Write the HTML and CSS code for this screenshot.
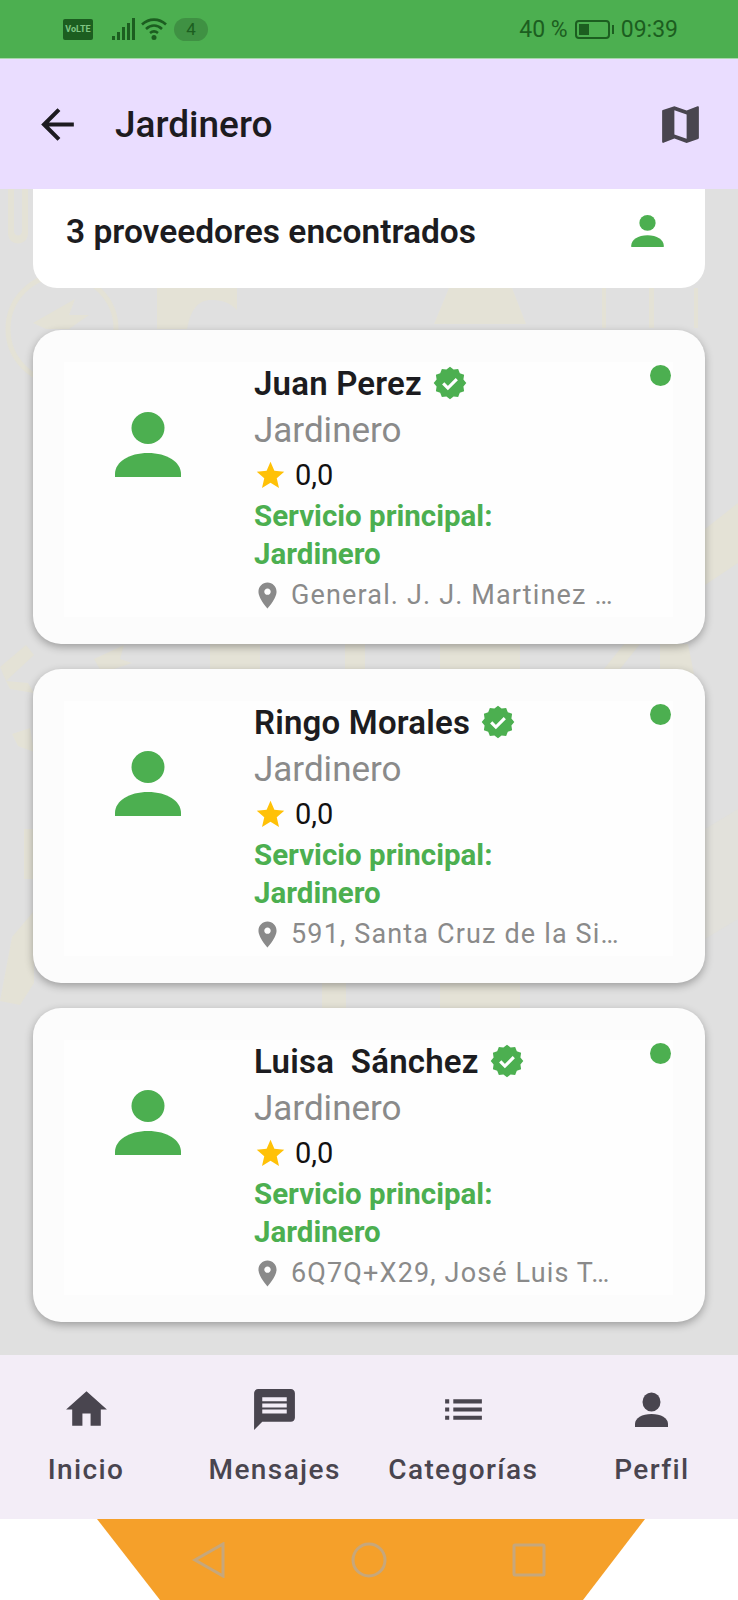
FILE: index.html
```html
<!DOCTYPE html>
<html lang="es">
<head>
  <meta charset="UTF-8">
  <title>Jardinero</title>
  <meta name="viewport" content="width=device-width, initial-scale=1.0">
  <link rel="stylesheet" href="styles.css">
</head>
<body>
  <div class="status-bar">
    <div class="status-left">
      <span class="volte">VoLTE</span>
      <svg class="signal" width="24" height="22" viewBox="0 0 24 22"><path d="M0 18h3v4H0zM5 14h3v8H5zM10 9h3v13h-3zM15 5h3v17h-3zM20 0h3v22h-3z"/></svg>
      <svg class="wifi" width="26" height="24" viewBox="0 0 26 24"><path d="M1 7.5C8 1 18 1 25 7.5M5 12c5-4.500 11-4.500 16 0M9 16c2.500-2 5.500-2 8 0" fill="none" stroke-width="2.600"/><circle cx="13" cy="20.500" r="2.500" stroke="none"/></svg>
      <span class="sim">4</span>
    </div>
    <div class="status-right">
      <span>40 %</span>
      <span class="battery"><span class="battery-fill"></span></span>
      <span>09:39</span>
    </div>
  </div>

  <header class="app-bar">
    <svg class="icon-49 dark" viewBox="0 0 24 24"><path d="M20 11H7.830l5.590-5.590L12 4l-8 8 8 8 1.410-1.410L7.830 13H20v-2z"/></svg>
    <h1>Jardinero</h1>
    <svg class="icon-49 grey" viewBox="0 0 24 24"><path d="M20.500 3l-.16.03L15 5.100 9 3 3.360 4.900c-.21.07-.36.25-.36.48V20.500c0 .28.22.5.5.5l.16-.03L9 18.900l6 2.100 5.640-1.900c.21-.07.36-.25.36-.48V3.500c0-.28-.22-.5-.5-.5zM15 19l-6-2.110V5l6 2.110V19z"/></svg>
  </header>

  <main class="content">
    <!-- faded wallpaper behind the list -->
    <svg class="wallpaper" width="738" height="1166" viewBox="0 0 738 1166">
      <g fill="#e4e2d6" stroke="none">
        <path d="M33 134l42-24-6 16h20l-20 14H46z"/>
        <path d="M157 99h80v22c-8-8-16-10-26-10-12 0-20 8-24 29h-30z"/>
        <path d="M449 99h63l14 36H434z"/>
        <rect x="602" y="99" width="4" height="40"/>
        <rect x="649" y="99" width="5" height="40"/>
        <rect x="694" y="99" width="4" height="40"/>
        <path d="M0 478l26-22 8 10-28 26zM6 492l22 2 6 10-24-4z"/>
        <path d="M12 545l18-6 4 24-16-6z"/>
        <path d="M24 640h10v50H24z"/>
        <path d="M0 812l12-64 22-26v72l-14 22z"/>
        <path d="M94 470l30-14-4 14 12 4-30 10z"/>
        <rect x="210" y="455" width="50" height="30"/>
        <rect x="345" y="455" width="20" height="30"/>
        <rect x="440" y="455" width="80" height="30"/>
        <path d="M600 485l24-30h16l-24 30zM660 455h28l6 30h-34z"/>
        <rect x="322" y="794" width="24" height="30"/>
        <rect x="440" y="794" width="80" height="30"/>
        <path d="M705 340l33-26v60l-33 22z"/>
        <path d="M705 640l33-20v110l-33 20z" fill-opacity="0.5"/>
        <path d="M8 0h6v42c0 6 8 6 8 0V0h6v44c0 14-20 14-20 0z"/>
      </g>
      <circle cx="62" cy="140" r="54" fill="none" stroke="#e4e2d6" stroke-width="5"/>
    </svg>

    <section class="summary">
      <h2>3 proveedores encontrados</h2>
      <svg class="person green" width="33" height="32" viewBox="0 0 66 65"><ellipse cx="33" cy="16" rx="16.500" ry="16"/><path d="M0 65v-3c0-12 14-21 33-21s33 9 33 21v3z"/></svg>
    </section>

    <article class="card">
      <div class="card-inner">
        <div class="avatar">
          <svg class="person green" width="66" height="65" viewBox="0 0 66 65"><ellipse cx="33" cy="16" rx="16.500" ry="16"/><path d="M0 65v-3c0-12 14-21 33-21s33 9 33 21v3z"/></svg>
        </div>
        <div class="info">
          <div class="name"><span>Juan Perez</span><svg class="verified" viewBox="0 0 24 24"><polygon points="12,.5 14.540,2.530 17.750,2.040 18.930,5.070 21.960,6.250 21.470,9.460 23.500,12 21.470,14.540 21.960,17.750 18.930,18.930 17.750,21.960 14.540,21.470 12,23.500 9.460,21.470 6.250,21.960 5.070,18.930 2.040,17.750 2.530,14.540 .5,12 2.530,9.460 2.040,6.250 5.070,5.070 6.250,2.040 9.460,2.530"/><path class="tick" d="M7.200 12.300l3.300 3.300 6.300-6.300"/></svg></div>
          <div class="role">Jardinero</div>
          <div class="rating"><svg class="star" viewBox="0 0 24 24"><path d="M12 17.270L18.180 21l-1.640-7.030L22 9.240l-7.190-.61L12 2 9.190 8.630 2 9.240l5.460 4.730L5.820 21z"/></svg><span>0,0</span></div>
          <div class="service">Servicio principal:</div>
          <div class="service">Jardinero</div>
          <div class="address"><svg class="pin" viewBox="0 0 24 24"><path d="M12 2C8.130 2 5 5.130 5 9c0 5.250 7 13 7 13s7-7.750 7-13c0-3.870-3.130-7-7-7zm0 9.500c-1.380 0-2.500-1.120-2.500-2.500s1.120-2.500 2.500-2.500 2.500 1.120 2.500 2.500-1.120 2.500-2.500 2.500z"/></svg><span>General. J. J. Martinez …</span></div>
        </div>
        <span class="online"></span>
      </div>
    </article>

    <article class="card">
      <div class="card-inner">
        <div class="avatar">
          <svg class="person green" width="66" height="65" viewBox="0 0 66 65"><ellipse cx="33" cy="16" rx="16.500" ry="16"/><path d="M0 65v-3c0-12 14-21 33-21s33 9 33 21v3z"/></svg>
        </div>
        <div class="info">
          <div class="name"><span>Ringo Morales</span><svg class="verified" viewBox="0 0 24 24"><polygon points="12,.5 14.540,2.530 17.750,2.040 18.930,5.070 21.960,6.250 21.470,9.460 23.500,12 21.470,14.540 21.960,17.750 18.930,18.930 17.750,21.960 14.540,21.470 12,23.500 9.460,21.470 6.250,21.960 5.070,18.930 2.040,17.750 2.530,14.540 .5,12 2.530,9.460 2.040,6.250 5.070,5.070 6.250,2.040 9.460,2.530"/><path class="tick" d="M7.200 12.300l3.300 3.300 6.300-6.300"/></svg></div>
          <div class="role">Jardinero</div>
          <div class="rating"><svg class="star" viewBox="0 0 24 24"><path d="M12 17.270L18.180 21l-1.640-7.030L22 9.240l-7.190-.61L12 2 9.190 8.630 2 9.240l5.460 4.730L5.820 21z"/></svg><span>0,0</span></div>
          <div class="service">Servicio principal:</div>
          <div class="service">Jardinero</div>
          <div class="address"><svg class="pin" viewBox="0 0 24 24"><path d="M12 2C8.130 2 5 5.130 5 9c0 5.250 7 13 7 13s7-7.750 7-13c0-3.870-3.130-7-7-7zm0 9.500c-1.380 0-2.500-1.120-2.500-2.500s1.120-2.500 2.500-2.500 2.500 1.120 2.500 2.500-1.120 2.500-2.500 2.500z"/></svg><span>591, Santa Cruz de la Si…</span></div>
        </div>
        <span class="online"></span>
      </div>
    </article>

    <article class="card">
      <div class="card-inner">
        <div class="avatar">
          <svg class="person green" width="66" height="65" viewBox="0 0 66 65"><ellipse cx="33" cy="16" rx="16.500" ry="16"/><path d="M0 65v-3c0-12 14-21 33-21s33 9 33 21v3z"/></svg>
        </div>
        <div class="info">
          <div class="name"><span>Luisa&nbsp; Sánchez</span><svg class="verified" viewBox="0 0 24 24"><polygon points="12,.5 14.540,2.530 17.750,2.040 18.930,5.070 21.960,6.250 21.470,9.460 23.500,12 21.470,14.540 21.960,17.750 18.930,18.930 17.750,21.960 14.540,21.470 12,23.500 9.460,21.470 6.250,21.960 5.070,18.930 2.040,17.750 2.530,14.540 .5,12 2.530,9.460 2.040,6.250 5.070,5.070 6.250,2.040 9.460,2.530"/><path class="tick" d="M7.200 12.300l3.300 3.300 6.300-6.300"/></svg></div>
          <div class="role">Jardinero</div>
          <div class="rating"><svg class="star" viewBox="0 0 24 24"><path d="M12 17.270L18.180 21l-1.640-7.030L22 9.240l-7.190-.61L12 2 9.190 8.630 2 9.240l5.460 4.730L5.820 21z"/></svg><span>0,0</span></div>
          <div class="service">Servicio principal:</div>
          <div class="service">Jardinero</div>
          <div class="address"><svg class="pin" viewBox="0 0 24 24"><path d="M12 2C8.130 2 5 5.130 5 9c0 5.250 7 13 7 13s7-7.750 7-13c0-3.870-3.130-7-7-7zm0 9.500c-1.380 0-2.500-1.120-2.500-2.500s1.120-2.500 2.500-2.500 2.500 1.120 2.500 2.500-1.120 2.500-2.500 2.500z"/></svg><span>6Q7Q+X29, José Luis T…</span></div>
        </div>
        <span class="online"></span>
      </div>
    </article>
  </main>

  <nav class="bottom-nav">
    <a class="nav-item">
      <svg class="icon-49 grey" viewBox="0 0 24 24"><path d="M10 20v-6h4v6h5v-8h3L12 3 2 12h3v8z"/></svg>
      <span>Inicio</span>
    </a>
    <a class="nav-item">
      <svg class="icon-49 grey" viewBox="0 0 24 24"><path d="M20 2H4c-1.100 0-1.990.9-1.990 2L2 22l4-4h14c1.100 0 2-.9 2-2V4c0-1.100-.9-2-2-2zm-2 12H6v-2h12v2zm0-3H6V9h12v2zm0-3H6V6h12v2z"/></svg>
      <span>Mensajes</span>
    </a>
    <a class="nav-item">
      <svg class="icon-49 grey" viewBox="0 0 24 24"><path d="M3 13h2v-2H3v2zm0 4h2v-2H3v2zm0-8h2V7H3v2zm4 4h14v-2H7v2zm0 4h14v-2H7v2zM7 7v2h14V7H7z"/></svg>
      <span>Categorías</span>
    </a>
    <a class="nav-item">
      <svg class="icon-49 grey" viewBox="0 0 49 49"><ellipse cx="24.500" cy="17" rx="9" ry="9.500"/><path d="M8 42v-3c0-6 7-10 16.500-10S41 33 41 39v3z"/></svg>
      <span>Perfil</span>
    </a>
  </nav>

  <div class="system-bar">
    <div class="system-buttons">
      <svg width="34" height="36" viewBox="0 0 34 36"><path d="M31 2v32L3 18z"/></svg>
      <svg width="36" height="36" viewBox="0 0 36 36"><circle cx="18" cy="18" r="16"/></svg>
      <svg width="34" height="36" viewBox="0 0 34 36"><rect x="2" y="3" width="30" height="30" rx="1"/></svg>
    </div>
  </div>
</body>
</html>
```
FILE: styles.css
```css
html, body {
  margin: 0;
  padding: 0;
}
body {
  width: 738px;
  height: 1600px;
  display: flex;
  flex-direction: column;
  overflow: hidden;
  font-family: Roboto, 'Noto Sans', sans-serif;
  background: #fff;
  color: #1d1b20;
}
svg {
  flex: none;
  display: block;
}
.icon-49 {
  width: 49px;
  height: 49px;
}
.dark {
  fill: #1d1b20;
}
.grey {
  fill: #49454f;
}
.green {
  fill: #4caf50;
}

/* status bar */
.status-bar {
  height: 58px;
  flex: none;
  background: #4caf50;
  border-bottom: 1px solid #a8d8aa;
  display: flex;
  align-items: center;
  justify-content: space-between;
  padding: 0 60px 0 63px;
  color: #1c5e20;
  font-size: 23px;
}
.status-left, .status-right {
  display: flex;
  align-items: center;
}
.volte {
  width: 30px;
  height: 21px;
  background: #1c5e20;
  color: #7fc583;
  border-radius: 2px;
  font-size: 9px;
  font-weight: 700;
  line-height: 21px;
  text-align: center;
  overflow: hidden;
}
.signal {
  margin-left: 19px;
  fill: #1c5e20;
}
.wifi {
  margin-left: 5px;
  fill: #1c5e20;
  stroke: #1c5e20;
}
.sim {
  margin-left: 7px;
  width: 34px;
  height: 23px;
  border-radius: 12px;
  background: #3f9143;
  font-size: 17px;
  line-height: 23px;
  text-align: center;
}
.battery {
  margin: 0 11px 0 7px;
  width: 35px;
  height: 19px;
  box-sizing: border-box;
  border: 2px solid #1c5e20;
  border-radius: 4px;
  padding: 2px;
  position: relative;
}
.battery::after {
  content: "";
  position: absolute;
  right: -6px;
  top: 3px;
  width: 2px;
  height: 9px;
  background: #1c5e20;
}
.battery-fill {
  display: block;
  width: 10px;
  height: 100%;
  background: #1c5e20;
}

/* app bar */
.app-bar {
  height: 130px;
  flex: none;
  background: #eaddff;
  display: flex;
  align-items: center;
  padding: 0 33px;
}
.app-bar h1 {
  flex: 1;
  margin: 0 0 0 33px;
  font-size: 37px;
  font-weight: 500;
}

/* list */
.content {
  flex: 1;
  position: relative;
  overflow: hidden;
  background: #e0e0e0;
  padding: 0 33px;
  display: flex;
  flex-direction: column;
}
.wallpaper {
  position: absolute;
  left: 0;
  top: 0;
}
.summary {
  position: relative;
  height: 99px;
  box-sizing: border-box;
  flex: none;
  background: #fff;
  border-radius: 0 0 24px 24px;
  display: flex;
  align-items: center;
  justify-content: space-between;
  padding: 0 41px 15px 33px;
}
.summary h2 {
  margin: 0;
  font-size: 33.5px;
  font-weight: 600;
  color: #1c1c20;
}
.card {
  position: relative;
  flex: none;
  height: 314px;
  box-sizing: border-box;
  margin-top: 25px;
  padding: 32px 32px 27px 31px;
  background: #fcfcfc;
  border-radius: 28px;
  box-shadow: 0 3px 9px rgba(0, 0, 0, 0.3);
}
.summary + .card {
  margin-top: 42px;
}
.card-inner {
  height: 100%;
  display: flex;
  background: #fefefe;
  padding-right: 2px;
}
.avatar {
  width: 167px;
  margin-right: 23px;
  padding-top: 50px;
  box-sizing: border-box;
  display: flex;
  justify-content: center;
  flex: none;
}
.info {
  flex: 1;
  min-width: 0;
}
.online {
  flex: none;
  width: 21px;
  height: 21px;
  margin-top: 3px;
  border-radius: 50%;
  background: #4caf50;
}
.name {
  display: flex;
  align-items: center;
  height: 42px;
  font-size: 33px;
  font-weight: 600;
  letter-spacing: 0.2px;
  color: #1c1c20;
}
.verified {
  width: 34px;
  height: 34px;
  margin-left: 11px;
  fill: #4caf50;
}
.tick {
  fill: none;
  stroke: #fff;
  stroke-width: 2.2;
}
.role {
  margin-top: 7px;
  height: 40px;
  line-height: 40px;
  font-size: 35px;
  color: #8a8a8a;
}
.rating {
  margin-top: 6px;
  height: 36px;
  display: flex;
  align-items: center;
  font-size: 29px;
  color: #111;
}
.star {
  width: 33px;
  height: 33px;
  margin-right: 8px;
  fill: #ffc107;
}
.service {
  height: 38px;
  line-height: 38px;
  font-size: 29.5px;
  font-weight: 700;
  color: #4caf50;
}
.rating + .service {
  margin-top: 4px;
}
.address {
  margin-top: 2px;
  height: 40px;
  display: flex;
  align-items: center;
  font-size: 27px;
  letter-spacing: 1.15px;
  color: #8a8a8a;
  white-space: nowrap;
}
.pin {
  width: 31px;
  height: 31px;
  margin-left: -2px;
  margin-right: 8px;
  fill: #8a8a8a;
}

/* bottom navigation */
.bottom-nav {
  height: 164px;
  flex: none;
  box-sizing: border-box;
  background: #f3edf7;
  display: flex;
  justify-content: space-between;
  padding: 30px 6px 0;
}
.nav-item {
  width: 160px;
  display: flex;
  flex-direction: column;
  align-items: center;
  font-size: 28px;
  font-weight: 500;
  letter-spacing: 1.4px;
  color: #49454f;
}
.nav-item span {
  margin-top: 16px;
  line-height: 40px;
  white-space: nowrap;
}

/* system buttons */
.system-bar {
  height: 81px;
  flex: none;
  background: #f5a02a;
  clip-path: polygon(97px 0, 645px 0, 583px 100%, 160px 100%);
}
.system-buttons {
  height: 100%;
  box-sizing: border-box;
  display: flex;
  justify-content: center;
  gap: 125px;
  padding-top: 23px;
}
.system-buttons svg {
  fill: none;
  stroke: #c6a77c;
  stroke-width: 3;
}
```
